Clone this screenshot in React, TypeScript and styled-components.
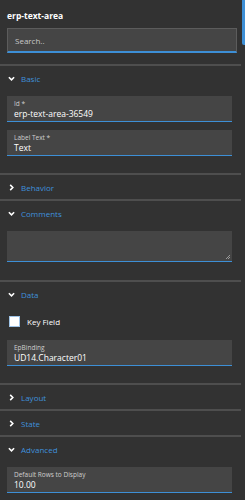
import styled, { createGlobalStyle } from "styled-components";

const Global = createGlobalStyle`
  html, body {
    margin: 0;
    padding: 0;
    background: #323232;
  }
  body {
    font-family: "Open Sans", "Liberation Sans", sans-serif;
    color: #fff;
  }
`;

const Panel = styled.div`
  position: relative;
  width: 245px;
  height: 500px;
  overflow: hidden;
  background: #323232;
`;

const Scrollbar = styled.div`
  position: absolute;
  top: 0;
  right: 0;
  width: 3px;
  height: 45px;
  background: #3d8fd6;
  border-radius: 0 0 0 2px;
`;

const Content = styled.div`
  width: 241px;
`;

const Top = styled.div`
  padding: 10px 4px 11px 7px;
`;

const Title = styled.div`
  font-size: 8.5px;
  font-weight: 700;
  line-height: 11px;
  margin-bottom: 7px;
`;

const Search = styled.div`
  height: 25px;
  background: #454545;
  border: 1px solid #5c5c5c;
  border-bottom: 2px solid #3d8fd6;
  box-sizing: border-box;
  display: flex;
  align-items: center;
  padding-left: 7px;
  font-size: 8px;
  color: #c8c8c8;
`;

const Section = styled.div`
  border-top: 2px solid #4e4e4e;
`;

const Header = styled.div`
  height: 24px;
  display: flex;
  align-items: center;
  padding-left: 8px;
  gap: 6px;
  font-size: 8px;
  color: #3f91dc;
`;

const Body = styled.div`
  padding: 6px 9px 17px 7px;
  display: flex;
  flex-direction: column;
  gap: 8px;
`;

const Field = styled.div`
  height: 26px;
  background: #454545;
  border-bottom: 1px solid #3d8fd6;
  box-sizing: border-box;
  padding: 3px 7px 0;
  display: flex;
  flex-direction: column;
`;

const FieldLabel = styled.div`
  font-size: 6.5px;
  line-height: 9px;
  color: #cfcfcf;
`;

const FieldValue = styled.div`
  font-size: 8.5px;
  line-height: 11px;
  color: #fff;
`;

const TextArea = styled.div`
  position: relative;
  height: 31px;
  background: #454545;
  border-bottom: 1px solid #3d8fd6;
  box-sizing: border-box;
  margin-bottom: 1px;
`;

const Grip = styled.svg`
  position: absolute;
  right: 1px;
  bottom: 1px;
`;

const CheckRow = styled.label`
  height: 18px;
  display: flex;
  align-items: center;
  gap: 7px;
  padding-left: 2px;
  margin-bottom: 2px;
  font-size: 8px;
`;

const Box = styled.span`
  width: 9px;
  height: 9px;
  background: #fff;
  border: 1px solid #9fc3e6;
`;

function Chevron({ open }: { open?: boolean }) {
  return (
    <svg width="7" height="7" viewBox="0 0 8 8">
      {open ? (
        <path d="M1 2.5 L4 5.5 L7 2.5" fill="none" stroke="#fff" strokeWidth="1.8" />
      ) : (
        <path d="M2.5 1 L5.5 4 L2.5 7" fill="none" stroke="#fff" strokeWidth="1.8" />
      )}
    </svg>
  );
}

function SectionHead({ title, open }: { title: string; open?: boolean }) {
  return (
    <Header>
      <Chevron open={open} />
      {title}
    </Header>
  );
}

function Input({ label, value }: { label: string; value: string }) {
  return (
    <Field>
      <FieldLabel>{label}</FieldLabel>
      <FieldValue>{value}</FieldValue>
    </Field>
  );
}

export default function App() {
  return (
    <Panel>
      <Global />
      <Scrollbar />
      <Content>
        <Top>
          <Title>erp-text-area</Title>
          <Search>Search..</Search>
        </Top>
        <Section>
          <SectionHead title="Basic" open />
          <Body>
            <Input label="Id *" value="erp-text-area-36549" />
            <Input label="Label Text *" value="Text" />
          </Body>
        </Section>
        <Section>
          <SectionHead title="Behavior" />
        </Section>
        <Section>
          <SectionHead title="Comments" open />
          <Body>
            <TextArea>
              <Grip width="6" height="6" viewBox="0 0 6 6">
                <path d="M5 1 L1 5 M5 3 L3 5" stroke="#999" strokeWidth="1" />
              </Grip>
            </TextArea>
          </Body>
        </Section>
        <Section>
          <SectionHead title="Data" open />
          <Body>
            <CheckRow>
              <Box />
              Key Field
            </CheckRow>
            <Input label="EpBinding" value="UD14.Character01" />
          </Body>
        </Section>
        <Section>
          <SectionHead title="Layout" />
        </Section>
        <Section>
          <SectionHead title="State" />
        </Section>
        <Section>
          <SectionHead title="Advanced" open />
          <Body>
            <Input label="Default Rows to Display" value="10.00" />
          </Body>
        </Section>
      </Content>
    </Panel>
  );
}
